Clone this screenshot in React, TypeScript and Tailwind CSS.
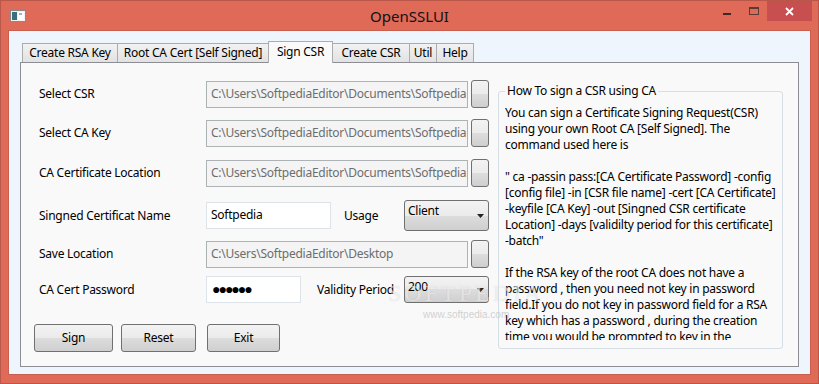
import React from 'react';

const BTN_BG =
  'bg-[linear-gradient(to_bottom,#F3F3F3_0%,#EBEBEB_50%,#DDDDDD_50%,#CFCFCF_100%)]';

const TABS = [
  { label: 'Create RSA Key', w: 'w-[96px]' },
  { label: 'Root CA Cert [Self Signed]', w: 'w-[152px]' },
  { label: 'Sign CSR', w: 'w-[65px]', active: true },
  { label: 'Create CSR', w: 'w-[78px]' },
  { label: 'Util', w: 'w-[28px]' },
  { label: 'Help', w: 'w-[38px]' },
];

const HELP_LINES = [
  'You can sign a Certificate Signing Request(CSR)',
  'using your own Root CA [Self Signed]. The',
  'command used here is',
  '',
  '" ca -passin pass:[CA Certificate Password] -config',
  '[config file] -in [CSR file name] -cert [CA Certificate]',
  '-keyfile [CA Key] -out [Singned CSR certificate',
  'Location] -days [validilty period for this certificate]',
  '-batch"',
  '',
  'If the RSA key of the root CA does not have a',
  'password , then you need not key in password',
  'field.If you do not key in password field for a RSA',
  'key which has a password , during the creation',
  'time you would be prompted to key in the',
];

function PathBox({ value }: { value: string }) {
  return (
    <>
      <div className="flex h-[27px] w-[262px] items-center overflow-hidden whitespace-nowrap border border-[#ADB2B5] bg-[#F4F4F4] px-[4px] text-[#6D6D6D]">
        {value}
      </div>
      <button className={`ml-[3px] h-[28px] w-[18px] rounded-[3px] border border-[#707070] ${BTN_BG}`} />
    </>
  );
}

function Combo({ value, h }: { value: string; h: string }) {
  return (
    <div className={`relative ${h} w-[85px] rounded-[3px] border border-[#707070] ${BTN_BG} pl-[3px] pt-[2px]`}>
      {value}
      <svg className="absolute right-[4px] top-1/2 -translate-y-1/2" width="7" height="4" viewBox="0 0 7 4">
        <path d="M0 0H7L3.5 4Z" fill="#222" />
      </svg>
    </div>
  );
}

export default function App() {
  return (
    <div className="relative h-[384px] w-[819px] overflow-hidden border border-[#B9574A] bg-[#DF6A58] font-['Noto_Sans',sans-serif] text-[12px] leading-[16px] tracking-[-0.25px] text-black">
      {/* title bar */}
      <div className="grid h-[29px] grid-cols-[1fr_auto_1fr]">
        <div className="flex items-start pl-[9px] pt-[9px]">
          <svg width="16" height="12" viewBox="0 0 16 12">
            <rect x="0.5" y="0.5" width="15" height="11" fill="#F2F2F2" stroke="#8A8A8A" />
            <rect x="2" y="2" width="5" height="8" fill="#3E6E78" />
            <rect x="8" y="2" width="6" height="8" fill="#FFFFFF" />
            <rect x="9" y="3" width="3" height="2" fill="#9CB7BE" />
          </svg>
        </div>
        <div className="pt-[5px] text-[15px] leading-[20px] tracking-normal text-[#111]">OpenSSLUI</div>
        <div className="flex justify-end pr-[6px]">
          <div className="flex h-[20px] w-[26px] items-center justify-center">
            <div className="mt-[5px] h-[2px] w-[8px] bg-[#3B2A27]" />
          </div>
          <div className="flex h-[20px] w-[27px] items-start justify-center pt-[6px]">
            <div className="h-[8px] w-[10px] border border-t-2 border-[#5A3A34]" />
          </div>
          <div className="flex h-[20px] w-[45px] items-center justify-center bg-[#C74F4F]">
            <svg width="9" height="9" viewBox="0 0 9 9">
              <path d="M1 1L8 8M8 1L1 8" stroke="#fff" strokeWidth="1.8" />
            </svg>
          </div>
        </div>
      </div>

      {/* client area */}
      <div className="mx-[7px] h-[345px] border border-[#C9604F] bg-[#EEF5FD] pl-[11px] pt-[10px]">
        <div className="flex h-[21px] items-end pl-[2px]">
          {TABS.map(t => (
            <div
              key={t.label}
              className={
                t.active
                  ? `relative z-10 -mb-px -mr-px flex h-[22px] ${t.w} justify-center border border-b-0 border-[#ACACAC] bg-[#F9F9F9] pt-[2px]`
                  : `-mr-px flex h-[19px] ${t.w} justify-center border border-b-0 border-[#ACACAC] bg-linear-to-b from-[#F2F2F2] to-[#E2E2E2] pt-[1px]`
              }
            >
              {t.label}
            </div>
          ))}
        </div>

        <div className="relative flex h-[305px] w-[779px] border border-[#8C8E94] bg-[#F9F9F9]">
          {/* form */}
          <div className="flex w-[477px] flex-col">
            <div className="mt-[17px] flex h-[28px] items-center pl-[18px]">
              <div className="w-[167px]">Select CSR</div>
              <PathBox value="C:\Users\SoftpediaEditor\Documents\Softpedia" />
            </div>
            <div className="mt-[11px] flex h-[28px] items-center pl-[18px]">
              <div className="w-[167px]">Select CA Key</div>
              <PathBox value="C:\Users\SoftpediaEditor\Documents\Softpedia" />
            </div>
            <div className="mt-[12px] flex h-[28px] items-center pl-[18px]">
              <div className="w-[167px]">CA Certificate Location</div>
              <PathBox value="C:\Users\SoftpediaEditor\Documents\Softpedia.xml" />
            </div>
            <div className="mt-[13px] flex h-[31px] items-center pl-[18px]">
              <div className="w-[167px]">Singned Certificat Name</div>
              <div className="flex h-[27px] w-[125px] items-center border border-[#DDE3E9] bg-white px-[4px] pb-[2px]">
                Softpedia
              </div>
              <div className="ml-[13px] w-[60px]">Usage</div>
              <Combo value="Client" h="h-[31px]" />
            </div>
            <div className="mt-[9px] flex h-[28px] items-center pl-[18px]">
              <div className="w-[167px]">Save Location</div>
              <PathBox value="C:\Users\SoftpediaEditor\Desktop" />
            </div>
            <div className="mt-[8px] flex h-[27px] items-center pl-[18px]">
              <div className="w-[167px]">CA Cert Password</div>
              <div className="flex h-[27px] w-[95px] items-center border border-[#DDE3E9] bg-white px-[5px] pb-[2px] text-[14px] tracking-[-2px]">
                ●●●●●●
              </div>
              <div className="ml-[16px] w-[87px]">Validity Period</div>
              <Combo value="200" h="h-[27px]" />
            </div>
            <div className="mt-[21px] flex pl-[13px]">
              <button className={`h-[28px] w-[79px] rounded-[3px] border border-[#707070] ${BTN_BG}`}>Sign</button>
              <button className={`ml-[8px] h-[28px] w-[75px] rounded-[3px] border border-[#707070] ${BTN_BG}`}>Reset</button>
              <button className={`ml-[11px] h-[28px] w-[73px] rounded-[3px] border border-[#707070] ${BTN_BG}`}>Exit</button>
            </div>
          </div>

          {/* help group */}
          <fieldset className="mt-[20px] h-[266px] w-[285px] rounded-[3px] border border-[#D5DFE5] px-[6px]">
            <legend className="px-[2px]">How To sign a CSR using CA</legend>
            <div className="mt-[6px] h-[235px] overflow-hidden">
              {HELP_LINES.map((l, i) => (
                <div key={i} className="h-[16px] whitespace-nowrap">
                  {l}
                </div>
              ))}
            </div>
          </fieldset>

          {/* watermark */}
          <div className="pointer-events-none absolute left-[367px] top-[217px] flex flex-col items-center">
            <div className="font-['Liberation_Serif',serif] text-[24px] leading-[26px] tracking-[3px] text-white/60 [text-shadow:0_0_1px_rgba(0,0,0,0.15)]">
              SOFTPEDIA
            </div>
            <div className="mt-[3px] font-['Liberation_Sans',sans-serif] text-[10px] leading-[12px] tracking-normal text-[#BDBDBD]/70">
              www.softpedia.com
            </div>
          </div>
        </div>
      </div>
    </div>
  );
}
